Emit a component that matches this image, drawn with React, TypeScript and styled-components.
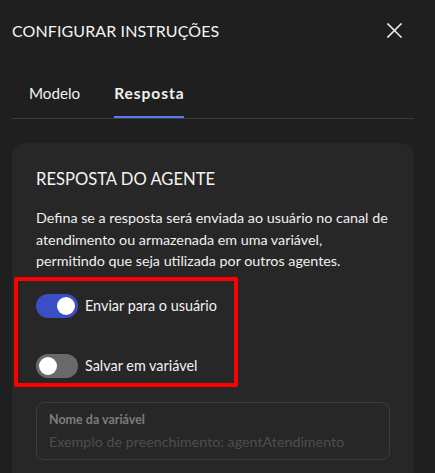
import React from "react";
import styled, { createGlobalStyle } from "styled-components";

const Global = createGlobalStyle`
  html, body { margin: 0; padding: 0; background: #1f1f1f; overflow: hidden; }
  body { font-family: Lato, "Noto Sans", sans-serif; color: #f2f2f2; }
  * { box-sizing: border-box; }
`;

const Page = styled.div`
  width: 435px;
  height: 473px;
  padding: 0 21px 0 12px;
  overflow: hidden;
`;

const Header = styled.div`
  height: 60px;
  display: flex;
  align-items: center;
  justify-content: space-between;
`;

const Title = styled.h1`
  margin: 0;
  font-size: 16px;
  font-weight: 400;
  letter-spacing: 0.1px;
  color: #f4f4f4;
`;

const CloseButton = styled.button`
  width: 24px;
  height: 24px;
  margin-right: 8px;
  padding: 0;
  border: none;
  background: transparent;
  display: flex;
  align-items: center;
  justify-content: center;
  cursor: pointer;
`;

const Tabs = styled.div`
  display: flex;
  gap: 34px;
  padding: 22px 0 0 17px;
  border-bottom: 1px solid #3d3d3d;
`;

const Tab = styled.div<{ $active?: boolean }>`
  font-size: ${(p) => (p.$active ? "15.6px" : "15.2px")};
  line-height: 22px;
  padding-bottom: 12px;
  font-weight: ${(p) => (p.$active ? 700 : 400)};
  letter-spacing: ${(p) => (p.$active ? "0.9px" : "0")};
  color: #f2f2f2;
  border-bottom: 2px solid ${(p) => (p.$active ? "#5b7cf0" : "transparent")};
`;

const Card = styled.section`
  margin-top: 24px;
  background: #272727;
  border-radius: 14px;
  padding: 25px 24px 24px;
`;

const SectionTitle = styled.h2`
  margin: 0;
  font-size: 16.6px;
  line-height: 22px;
  font-weight: 400;
  color: #f4f4f4;
`;

const Description = styled.p`
  margin: 17px 0 0;
  font-size: 14.3px;
  line-height: 21.5px;
  color: #f0f0f0;
`;

const Highlight = styled.div`
  margin: 5px 0 0 -22px;
  width: 224px;
  border: 4px solid #ff0000;
  border-radius: 2px;
  padding: 13px 0 5px 18px;
  display: flex;
  flex-direction: column;
  gap: 36px;
`;

const ToggleRow = styled.label`
  display: flex;
  align-items: center;
  gap: 7px;
  font-size: 14.4px;
  color: #f2f2f2;
  height: 24px;
`;

const Track = styled.span<{ $on?: boolean }>`
  position: relative;
  width: 42px;
  height: 24px;
  border-radius: 12px;
  background: ${(p) => (p.$on ? "#3a4ec5" : "#6a6a6a")};
  flex-shrink: 0;
`;

const Knob = styled.span<{ $on?: boolean }>`
  position: absolute;
  top: 3px;
  left: ${(p) => (p.$on ? "21px" : "3px")};
  width: 18px;
  height: 18px;
  border-radius: 50%;
  background: #ffffff;
`;

const Field = styled.div`
  margin-top: 15px;
  height: 58px;
  border: 1px solid #3c3c3c;
  border-radius: 8px;
  padding: 8px 12px;
  display: flex;
  flex-direction: column;
`;

const FieldLabel = styled.span`
  font-size: 12.5px;
  line-height: 18px;
  font-weight: 700;
  color: #7c7c7c;
`;

const FieldInput = styled.input`
  margin-top: 3px;
  padding: 0;
  border: none;
  background: transparent;
  font-family: inherit;
  font-size: 14.3px;
  line-height: 20px;
  color: #ddd;
  outline: none;
  &::placeholder { color: #4e4e4e; }
`;

function Toggle({ on, label }: { on?: boolean; label: string }) {
  return (
    <ToggleRow>
      <Track $on={on}>
        <Knob $on={on} />
      </Track>
      {label}
    </ToggleRow>
  );
}

export default function App() {
  return (
    <Page>
      <Global />
      <Header>
        <Title>CONFIGURAR INSTRUÇÕES</Title>
        <CloseButton aria-label="Fechar">
          <svg width="15" height="15" viewBox="0 0 15 15">
            <path d="M1 1 L14 14 M14 1 L1 14" stroke="#e8e8e8" strokeWidth="1.6" strokeLinecap="square" />
          </svg>
        </CloseButton>
      </Header>
      <Tabs>
        <Tab>Modelo</Tab>
        <Tab $active>Resposta</Tab>
      </Tabs>
      <Card>
        <SectionTitle>RESPOSTA DO AGENTE</SectionTitle>
        <Description>
          Defina se a resposta será enviada ao usuário no canal de atendimento ou armazenada em uma variável,
          <br />
          permitindo que seja utilizada por outros agentes.
        </Description>
        <Highlight>
          <Toggle on label="Enviar para o usuário" />
          <Toggle label="Salvar em variável" />
        </Highlight>
        <Field>
          <FieldLabel>Nome da variável</FieldLabel>
          <FieldInput placeholder="Exemplo de preenchimento: agentAtendimento" />
        </Field>
      </Card>
    </Page>
  );
}
